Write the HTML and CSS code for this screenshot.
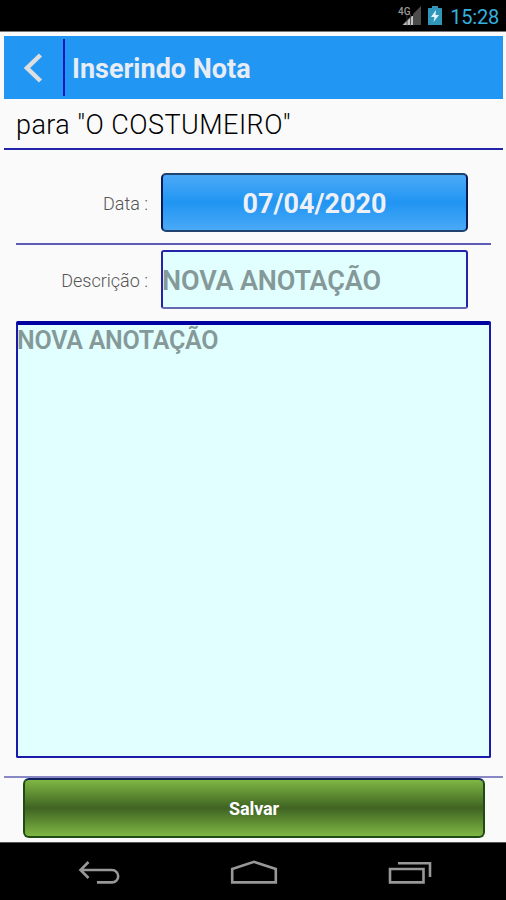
FILE: index.html
```html
<!DOCTYPE html>
<html lang="pt">
<head>
<meta charset="utf-8">
<title>Inserindo Nota</title>
<link rel="stylesheet" href="styles.css">
</head>
<body>
<div class="status">
  <svg class="signal" width="25" height="24" viewBox="0 0 25 24">
    <path d="M23 2V21H4Z" fill="#4b4b4b"/>
    <path d="M15 11V21H5Z" fill="#c4c4c4"/>
    <path d="M0 0H15V12H0Z" fill="#000"/>
    <path d="M9 10V22M12.5 10V22" stroke="#333" stroke-width=".8"/>
    <text x="0" y="11" class="network">4G</text>
  </svg>
  <svg class="battery" width="14" height="20" viewBox="0 0 14 20">
    <path d="M4 0H10V2H13Q14 2 14 3V19H0V3Q0 2 1 2H4Z" fill="#3096ba"/>
    <path d="M8 4L3 11H6.5L5.5 16L11 9H7.5Z" fill="#e6f5fa"/>
  </svg>
  <span class="clock">15:28</span>
</div>
<main class="screen">
  <header class="header">
    <div class="back">
      <svg width="20" height="30" viewBox="0 0 20 30"><path d="M17.5 2L4 15L17.5 28" fill="none" stroke="#dedede" stroke-width="4.5"/></svg>
    </div>
    <h1 class="title">Inserindo Nota</h1>
  </header>
  <div class="subtitle"><span>para "O COSTUMEIRO"</span></div>
  <div class="form">
    <div class="row date-row">
      <span class="label">Data :</span>
      <button class="date">07/04/2020</button>
    </div>
    <div class="row desc-row">
      <span class="label">Descrição :</span>
      <div class="field">NOVA ANOTAÇÃO</div>
    </div>
    <div class="note">NOVA ANOTAÇÃO</div>
  </div>
  <footer class="footer"><button class="save">Salvar</button></footer>
</main>
<nav class="nav">
  <svg width="44" height="26" viewBox="0 0 44 26"><path d="M11.5 1L3.5 9L11.5 17M3.5 9H35A6.2 6.2 0 0 1 35 21.4H20"/></svg>
  <svg width="48" height="26" viewBox="0 0 48 26"><path d="M2.2 8L24 .8L45.8 8V21.4H2.2Z"/></svg>
  <svg width="46" height="26" viewBox="0 0 46 26"><path d="M4 8H37.5V21.4H4ZM12 2.2H44V16"/></svg>
</nav>
</body>
</html>
```
FILE: styles.css
```css
* { box-sizing: border-box; }
body {
  margin: 0;
  height: 900px;
  display: flex;
  flex-direction: column;
  overflow: hidden;
  background: #fafafa;
  font-family: Roboto, sans-serif;
}
button { font-family: inherit; padding: 0; }
.status {
  height: 32px;
  flex: none;
  display: flex;
  align-items: flex-start;
  justify-content: flex-end;
  padding: 4px 7px 0 0;
  background: #000;
  border-bottom: 1px solid #777;
}
.signal { margin-right: 5px; }
.network { font: 500 10px Roboto, sans-serif; fill: #999; }
.battery { margin: 2px 8px 0 0; }
.clock { color: #35b0df; font-size: 20px; line-height: 26px; letter-spacing: -0.2px; }
.screen { height: 810px; flex: none; padding: 4px 3px 0 4px; }
.header { height: 63px; display: flex; align-items: center; background: #2196f3; }
.back {
  width: 61px;
  height: 57px;
  display: flex;
  align-items: center;
  padding-left: 19px;
  border-right: 2px solid #0b18bd;
}
.title { margin: 2px 0 0 7px; font-size: 27px; line-height: 32px; font-weight: 700; color: #e8ecf4; white-space: nowrap; }
.subtitle {
  height: 51px;
  padding: 9px 0 0 12px;
  border-bottom: 2px solid #2325a8;
  color: #000;
  font-size: 27px;
  font-weight: 350;
  letter-spacing: 0.45px;
  line-height: 34px;
  white-space: nowrap;
}
.form { padding: 0 12px; }
.row { display: flex; align-items: flex-start; }
.label {
  width: 145px;
  padding-right: 13px;
  text-align: right;
  color: #555;
  font-size: 18px;
  font-weight: 300;
  line-height: 61px;
  white-space: nowrap;
}
.date-row { height: 95px; padding-top: 23px; border-bottom: 2px solid #5c5cb8; }
.date {
  width: 307px;
  height: 59px;
  padding-top: 3px;
  border: 2px solid #20446d;
  border-left-color: #071a55;
  border-right-color: #071a55;
  border-radius: 5px;
  background: linear-gradient(#4caaf7, #2095f2 50%, #4aa9f7);
  color: #eef0f6;
  font-size: 27px;
  font-weight: 700;
}
.desc-row { height: 76px; padding-top: 5px; }
.field {
  width: 307px;
  height: 59px;
  border: 2px solid #2424aa;
  border-bottom-color: #6868b4;
  border-radius: 3px;
  background: #e2ffff;
  color: #859999;
  font-size: 27px;
  line-height: 58px;
  font-weight: 600;
  letter-spacing: -0.15px;
  text-indent: -1px;
  white-space: nowrap;
}
.note {
  height: 437px;
  border: 2px solid #1919aa;
  border-top: 4px solid #0000a0;
  border-radius: 2px;
  background: #e2ffff;
  color: #859999;
  font-size: 25px;
  line-height: 32px;
  font-weight: 600;
  letter-spacing: -0.25px;
  text-indent: -1px;
}
.footer { margin-top: 18px; border-top: 2px solid #8888c4; padding: 0 19px; }
.save {
  display: block;
  width: 462px;
  height: 60px;
  border: 2px solid #204c14;
  border-top-color: #10205f;
  border-radius: 6px;
  background: linear-gradient(#7fb744, #3f6322 50%, #7fb744);
  color: #fff;
  font-size: 18px;
  font-weight: 700;
  letter-spacing: -0.1px;
}
.nav {
  height: 58px;
  flex: none;
  display: flex;
  justify-content: space-between;
  padding: 18px 74px 0 77px;
  background: #000;
  border-top: 1px solid #555;
}
.nav svg { overflow: visible; }
.nav path { fill: none; stroke: #989898; stroke-width: 2.6; }
```
